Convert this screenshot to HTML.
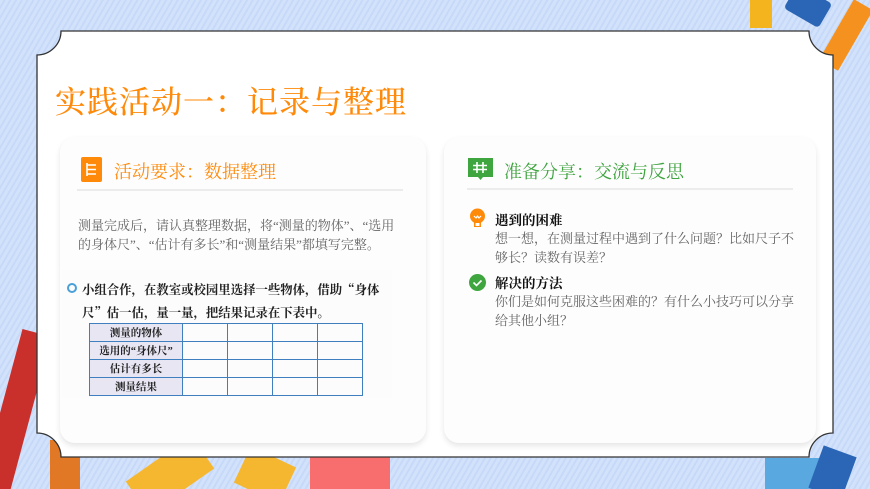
<!DOCTYPE html>
<html><head><meta charset="utf-8"><style>
*{margin:0;padding:0;box-sizing:border-box}
html,body{width:870px;height:489px;overflow:hidden}
body{position:relative;background:#cfe0fb;font-family:"Liberation Serif","Noto Serif CJK SC",serif}
.bg{position:absolute;inset:0;background:repeating-linear-gradient(120deg,#d3e2fb 0 3px,#c6d9f8 3px 5px)}
.deco{position:absolute;inset:0;overflow:hidden}
.abs{position:absolute}
.title{position:absolute;left:55px;top:77px;font-size:31px;color:#ff8a0a;letter-spacing:1px;font-weight:500}
.card{position:absolute;top:137px;height:306px;background:#fdfdfd;border-radius:15px;box-shadow:0 3px 6px rgba(0,0,0,.10)}
.hd{position:absolute;font-size:18px}
.line{position:absolute;height:2px;background:#ececec}
.p{position:absolute;font-size:13px;color:#666;line-height:19px}
.b{position:absolute;font-size:13.5px;color:#111;font-weight:700}
table{border-collapse:collapse;position:absolute;left:89px;top:323px}
td{border:1px solid #3f7fc0;height:18px;width:45px;font-size:10.5px;text-align:center;font-weight:700;color:#222}
td.f{width:93px;background:#e9e6f4}
</style></head><body>
<div class="bg"></div>
<div class="deco">
<div class="abs" style="left:750px;top:0;width:22px;height:28px;background:#f3b41e"></div>
<div class="abs" style="left:788px;top:-8px;width:40px;height:28px;background:#2a66b5;transform:rotate(30deg);border-radius:4px"></div>
<div class="abs" style="left:835px;top:0;width:22px;height:70px;background:#f5911e;transform:rotate(30deg)"></div>
<div class="abs" style="left:0;top:330px;width:30px;height:170px;background:#c9302c;transform:rotate(15deg)"></div>
<div class="abs" style="left:50px;top:440px;width:30px;height:60px;background:#e07826"></div>
<div class="abs" style="left:130px;top:455px;width:80px;height:40px;background:#f5b730;transform:rotate(-35deg)"></div>
<div class="abs" style="left:240px;top:455px;width:50px;height:40px;background:#f5b730;transform:rotate(25deg)"></div>
<div class="abs" style="left:310px;top:455px;width:80px;height:40px;background:#f86e6e"></div>
<div class="abs" style="left:765px;top:458px;width:60px;height:31px;background:#5aa8e0"></div>
<div class="abs" style="left:815px;top:450px;width:35px;height:45px;background:#2a66b5;transform:rotate(20deg)"></div>
</div>
<svg class="abs" style="left:0;top:0" width="870" height="489">
<path d="M61 31 H809 A24 24 0 0 0 833 55 V433 A24 24 0 0 0 809 457 H61 A24 24 0 0 0 37 433 V55 A24 24 0 0 0 61 31 Z" fill="#fff" stroke="#333" stroke-width="1.3"/>
</svg>
<div class="title">实践活动一：记录与整理</div>

<div class="card" style="left:60px;width:366px"></div>
<div class="abs" style="left:81px;top:157px;width:21px;height:25px;background:#ff8a0a;border-radius:2px"></div>
<svg class="abs" style="left:81px;top:157px" width="21" height="25"><path d="M6 6v13M6 8h9M6 12.5h9M6 17h9" stroke="#fff" stroke-width="1.6" fill="none"/></svg>
<div class="hd" style="left:114px;top:158px;color:#ff8a0a">活动要求：数据整理</div>
<div class="line" style="left:77px;top:189px;width:326px"></div>
<div class="p" style="left:78px;top:216px">测量完成后，请认真整理数据，将“测量的物体”、“选用<br>的身体尺”、“估计有多长”和“测量结果”都填写完整。</div>
<div class="abs" style="left:62px;top:270px;width:330px;height:128px;background:#fcfcfc"></div>
<div class="abs" style="left:67px;top:283px;width:10px;height:10px;border-radius:50%;border:2.5px solid #4ba0d8"></div>
<div class="abs" style="left:82px;top:278px;font-size:12.4px;font-weight:700;color:#222;line-height:23px;font-family:'Noto Serif CJK SC',serif">小组合作，在教室或校园里选择一些物体，借助“身体<br>尺”估一估，量一量，把结果记录在下表中。</div>
<table>
<tr><td class="f">测量的物体</td><td></td><td></td><td></td><td></td></tr>
<tr><td class="f">选用的“身体尺”</td><td></td><td></td><td></td><td></td></tr>
<tr><td class="f">估计有多长</td><td></td><td></td><td></td><td></td></tr>
<tr><td class="f">测量结果</td><td></td><td></td><td></td><td></td></tr>
</table>

<div class="card" style="left:444px;width:372px"></div>
<svg class="abs" style="left:467px;top:157px" width="27" height="25"><path d="M1 1h25v19h-10l-2.5 3-2.5-3H1z" fill="#3fa63f"/><path d="M10 5v11M16 5v11M6 8.5h14M6 12.5h14" stroke="#fff" stroke-width="1.6"/></svg>
<div class="hd" style="left:504px;top:158px;color:#3fa33f">准备分享：交流与反思</div>
<div class="line" style="left:467px;top:188px;width:326px"></div>
<svg class="abs" style="left:469px;top:208px" width="18" height="22"><circle cx="8.5" cy="8" r="7.5" fill="#ff8a0a"/><rect x="5" y="14" width="7" height="5" fill="#ff8a0a"/><rect x="6.5" y="15" width="4" height="3" fill="#fff"/><path d="M5 8l2 2 1.5-2 1.5 2 2-2" stroke="#fff" stroke-width="1.2" fill="none"/></svg>
<div class="b" style="left:495px;top:209px">遇到的困难</div>
<div class="p" style="left:495px;top:229px">想一想，在测量过程中遇到了什么问题？比如尺子不<br>够长？读数有误差？</div>
<svg class="abs" style="left:468px;top:273px" width="19" height="19"><circle cx="9.5" cy="9.5" r="8.5" fill="#3fa63f"/><path d="M5.5 9.5l3 3 5-5" stroke="#fff" stroke-width="1.6" fill="none"/></svg>
<div class="b" style="left:495px;top:272px">解决的方法</div>
<div class="p" style="left:495px;top:292px">你们是如何克服这些困难的？有什么小技巧可以分享<br>给其他小组？</div>
</body></html>
